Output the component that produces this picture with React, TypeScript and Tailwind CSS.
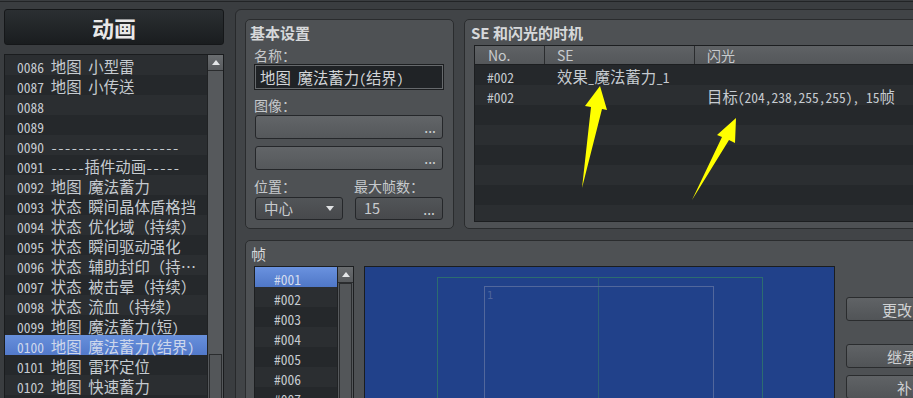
import React from 'react';

// runs of CJK glyphs get the CJK face; digits and ASCII use the half-width mono face
const CJK_RUN = /([\u2026\u2E80-\u9FFF\uFF00-\uFFEF]+)/;

function Mix({ text }: { text: string }) {
  return (
    <span className="whitespace-pre">
      {text.split(CJK_RUN).map((part, i) =>
        i % 2 === 1 ? (
          <span key={i} className="font-['Noto_Sans_CJK_SC',sans-serif] text-[15.4px]">
            {part}
          </span>
        ) : (
          <span key={i} className="font-['Noto_Sans_Mono_CJK_SC','DejaVu_Sans_Mono',monospace] text-[13.5px]">
            {part}
          </span>
        )
      )}
    </span>
  );
}

const animations = [
  '0086 地图 小型雷',
  '0087 地图 小传送',
  '0088',
  '0089',
  '0090 -------------------',
  '0091 -----插件动画-----',
  '0092 地图 魔法蓄力',
  '0093 状态 瞬间晶体盾格挡',
  '0094 状态 优化域（持续）',
  '0095 状态 瞬间驱动强化',
  '0096 状态 辅助封印（持…',
  '0097 状态 被击晕（持续）',
  '0098 状态 流血（持续）',
  '0099 地图 魔法蓄力(短)',
  '0100 地图 魔法蓄力(结界)',
  '0101 地图 雷环定位',
  '0102 地图 快速蓄力',
  '',
];

const timings = [
  { no: '#002', se: '效果_魔法蓄力_1', flash: '' },
  { no: '#002', se: '', flash: '目标(204,238,255,255), 15帧' },
  { no: '', se: '', flash: '' },
  { no: '', se: '', flash: '' },
  { no: '', se: '', flash: '' },
  { no: '', se: '', flash: '' },
  { no: '', se: '', flash: '' },
  { no: '', se: '', flash: '' },
];

const frames = ['#001', '#002', '#003', '#004', '#005', '#006', '#007'];

const UpArrow = () => (
  <svg width="8" height="5" viewBox="0 0 8 5">
    <polygon points="4,0 8,5 0,5" fill="#e4e6e8" />
  </svg>
);

const LeftPane = () => (
  <div className="w-[224px] shrink-0 pl-[4px] pt-[7px]">
    <div className="flex h-[36px] w-[220px] items-center justify-center rounded-[3px] border border-[#151719] bg-linear-to-b from-[#2b2f32] to-[#1a1d1f]">
      <span className="text-[22px] font-bold leading-none text-[#e8e8e8]">动画</span>
    </div>
    <div className="mt-[9px] flex h-[400px] w-[220px] border border-[#1a1c1e] bg-[#25282b]">
      <div className="w-[202px]">
        {animations.map((name, i) => (
          <div
            key={i}
            className={
              name.startsWith('0100')
                ? 'flex h-[20px] items-center bg-linear-to-b from-[#6890dc] to-[#5279ca] pl-[12px] pt-[2px] text-[#cdd7ec]'
                : i % 2 === 0
                  ? 'flex h-[20px] items-center bg-[#2b2e31] pl-[12px] pt-[2px] text-[#c6cbd0]'
                  : 'flex h-[20px] items-center bg-[#25282b] pl-[12px] pt-[2px] text-[#c6cbd0]'
            }
          >
            <Mix text={name} />
          </div>
        ))}
      </div>
      <div className="w-[16px] border-l border-[#202224] bg-[#56595c]">
        <div className="flex h-[16px] items-center justify-center border-b border-[#2a2c2e] bg-linear-to-b from-[#6a6d70] to-[#585b5e]">
          <UpArrow />
        </div>
        <div className="h-[283px]" />
        <div className="mx-[1px] h-[100px] border border-[#2a2c2e] bg-[#535659]" />
      </div>
    </div>
  </div>
);

const Field = ({ children, dark }: { children?: React.ReactNode; dark?: boolean }) => (
  <div
    className={
      dark
        ? 'flex h-[23px] w-[88px] items-center justify-between rounded-[3px] border border-[#25272a] bg-linear-to-b from-[#525558] to-[#47494c] pl-[8px] pr-[7px] text-[14.5px] text-[#c8cbce]'
        : 'ml-[1px] flex h-[24px] w-[188px] items-center justify-end rounded-[3px] border border-[#25272a] bg-linear-to-b from-[#626568] to-[#55585b] pr-[6px] text-[14px] text-[#cfd1d3]'
    }
  >
    {children}
  </div>
);

const Dots = () => <span className="text-[14px] leading-none text-[#d0d2d4]">...</span>;

const BasicPanel = () => (
  <div className="h-[210px] w-[209px] shrink-0 rounded-[5px] border border-[#2a2c2e] bg-[#4e5154] pt-[3px]">
    <div className="h-[20px] pl-[4px] text-[15px] font-bold leading-[20px] text-[#d6d8da]">基本设置</div>
    <div className="pl-[8px] text-[14px] text-[#c6c9cc]">
      <div className="mt-[2px] h-[20px] leading-[20px]">名称：</div>
      <div className="ml-[1px] flex h-[24px] w-[188px] items-center border border-[#66696c] bg-[#202326] pl-[4px] pt-[1px] text-[#d2d5d8] outline outline-[#1c1e20]">
        <Mix text="地图 魔法蓄力(结界)" />
      </div>
      <div className="mt-[6px] h-[20px] leading-[20px]">图像：</div>
      <Field>
        <Dots />
      </Field>
      <div className="mt-[7px]">
        <Field>
          <Dots />
        </Field>
      </div>
      <div className="mt-[6px] flex h-[20px] leading-[20px]">
        <div className="w-[100px]">位置：</div>
        <div>最大帧数：</div>
      </div>
      <div className="ml-[1px] mt-[1px] flex gap-[12px]">
        <Field dark>
          <span className="leading-none">中心</span>
          <svg width="8" height="5" viewBox="0 0 8 5" className="mr-[1px]">
            <polygon points="0,0 8,0 4,5" fill="#e0e2e4" />
          </svg>
        </Field>
        <Field dark>
          <span className="leading-none">15</span>
          <Dots />
        </Field>
      </div>
    </div>
  </div>
);

const SePanel = () => (
  <div className="h-[210px] w-[500px] shrink-0 rounded-[5px] border border-[#2a2c2e] bg-[#4e5154] pt-[3px]">
    <div className="h-[20px] pl-[6px] text-[15px] font-bold leading-[20px] text-[#d6d8da]">SE 和闪光的时机</div>
    <div className="ml-[9px] mt-[2px] h-[177px] w-[480px] overflow-hidden border border-[#1c1e20] bg-[#25282b]">
      <div className="flex h-[19px] border-b border-[#1c1e20] bg-linear-to-b from-[#5f6265] to-[#54575a] text-[14px] leading-[18px] text-[#c8cbce]">
        <div className="w-[70px] border-r border-[#2a2c2e] pl-[13px]">No.</div>
        <div className="w-[150px] border-r border-[#2a2c2e] pl-[12px]">SE</div>
        <div className="pl-[12px]">闪光</div>
      </div>
      {timings.map((row, i) => (
        <div
          key={i}
          className={
            i % 2 === 0
              ? 'flex h-[20px] items-center bg-[#25282b] pt-[2px] text-[#c6cbd0]'
              : 'flex h-[20px] items-center bg-[#2b2e31] pt-[2px] text-[#c6cbd0]'
          }
        >
          <div className="w-[70px] pl-[12px]">
            <Mix text={row.no} />
          </div>
          <div className="w-[150px] pl-[12px]">
            <Mix text={row.se} />
          </div>
          <div className="pl-[12px]">
            <Mix text={row.flash} />
          </div>
        </div>
      ))}
    </div>
  </div>
);

const FrameList = () => (
  <div className="flex h-[140px] w-[100px] shrink-0 border border-[#1d1f21] bg-[#25282b]">
    <div className="w-[82px]">
      {frames.map((f, i) => (
        <div
          key={f}
          className={
            i === 0
              ? 'flex h-[20px] items-center bg-linear-to-b from-[#6a92df] to-[#4f77c7] pl-[19px] pt-[2px] text-[#d3dcef]'
              : i % 2 === 1
                ? 'flex h-[20px] items-center bg-[#2b2e31] pl-[19px] pt-[2px] text-[#c6cbd0]'
                : 'flex h-[20px] items-center bg-[#25282b] pl-[19px] pt-[2px] text-[#c6cbd0]'
          }
        >
          <Mix text={f} />
        </div>
      ))}
    </div>
    <div className="w-[16px] border-l border-[#202224] bg-[#56595c]">
      <div className="flex h-[16px] items-center justify-center border-b border-[#2a2c2e] bg-linear-to-b from-[#6a6d70] to-[#585b5e]">
        <UpArrow />
      </div>
      <div className="mx-[1px] h-[120px] border border-[#2a2c2e] bg-[#535659]" />
    </div>
  </div>
);

const Canvas = () => (
  <div className="relative ml-[10px] h-[140px] w-[471px] shrink-0 border border-[#1b1d1f] bg-[#21418a]">
    <div className="absolute left-[72px] top-[10px] h-[200px] w-[326px] border border-[#2c6c70]" />
    <div className="absolute left-[233px] top-[10px] h-[200px] w-[1px] bg-[#2c6079]" />
    <div className="absolute left-[119px] top-[19px] h-[200px] w-[230px] border border-[#52679c]" />
    <div className="absolute left-[122px] top-[21px] font-['DejaVu_Sans',sans-serif] text-[10px] text-[#4e659d]">1</div>
  </div>
);

const SideButton = ({ label, pad }: { label: string; pad: string }) => (
  <div
    className={`flex h-[24px] w-[120px] items-center rounded-[3px] border border-[#2a2c2e] bg-linear-to-b from-[#606366] to-[#515457] text-[15px] leading-none text-[#cfd1d3] ${pad}`}
  >
    {label}
  </div>
);

const FramePanel = () => (
  <div className="h-[200px] w-[700px] rounded-[5px] border border-[#2a2c2e] bg-[#4e5154] pt-[3px]">
    <div className="h-[20px] pl-[5px] text-[15px] leading-[20px] text-[#d6d8da]">帧</div>
    <div className="mt-[2px] flex pl-[8px]">
      <FrameList />
      <Canvas />
      <div className="ml-[11px] mt-[31px] flex flex-col">
        <SideButton label="更改目标..." pad="pl-[35px]" />
        <div className="mt-[23px]">
          <SideButton label="继承上一帧" pad="pl-[40px]" />
        </div>
        <div className="mt-[7px]">
          <SideButton label="补间..." pad="pl-[50px]" />
        </div>
      </div>
    </div>
  </div>
);

const Workspace = () => (
  <div className="ml-[11px] mt-[7px] h-[420px] w-[700px] shrink-0 rounded-tl-[6px] border border-[#27292b] bg-[#414447] pl-[9px] pt-[9px]">
    <div className="flex h-[210px] gap-[10px]">
      <BasicPanel />
      <SePanel />
    </div>
    <div className="mt-[11px]">
      <FramePanel />
    </div>
  </div>
);

const Arrows = () => (
  <svg className="pointer-events-none absolute left-0 top-0" width="913" height="398" viewBox="0 0 913 398">
    <polygon points="600,86 607,110 602,109 582,188 591,107 585,106" fill="#ffff00" />
    <polygon points="736,118 735,143 729,140 692,200 722,137 717,135" fill="#ffff00" />
  </svg>
);

export default function App() {
  return (
    <div className="relative h-[398px] w-[913px] overflow-hidden bg-[#3a3d40] font-['Noto_Sans_CJK_SC',sans-serif] text-[#c6cacd]">
      <div className="h-[2px] border-b border-[#222426]" />
      <div className="flex">
        <LeftPane />
        <Workspace />
      </div>
      <Arrows />
    </div>
  );
}
